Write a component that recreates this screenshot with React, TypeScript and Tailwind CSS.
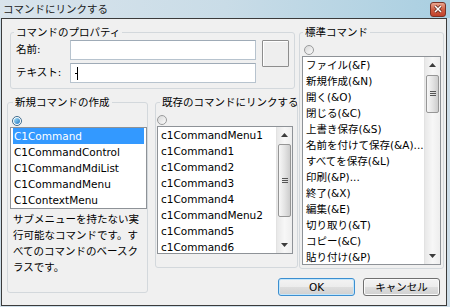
import React from "react";

const standardItems = [
  "ファイル(&F)",
  "新規作成(&N)",
  "開く(&O)",
  "閉じる(&C)",
  "上書き保存(&S)",
  "名前を付けて保存(&A)...",
  "すべてを保存(&L)",
  "印刷(&P)...",
  "終了(&X)",
  "編集(&E)",
  "切り取り(&T)",
  "コピー(&C)",
  "貼り付け(&P)",
];

const linkItems = [
  "c1CommandMenu1",
  "c1Command1",
  "c1Command2",
  "c1Command3",
  "c1Command4",
  "c1CommandMenu2",
  "c1Command5",
  "c1Command6",
];

const newItems = ["C1Command", "C1CommandControl", "C1CommandMdiList", "C1CommandMenu", "C1ContextMenu"];

function Radio({ checked = false }: { checked?: boolean }) {
  return (
    <div
      className={`flex h-[10px] w-[10px] items-center justify-center rounded-full border ${
        checked ? "border-[#3d6a8c] bg-white" : "border-[#9a9b9c] bg-gradient-to-br from-[#d8d8d8] to-[#fbfbfb]"
      }`}
    >
      {checked && <div className="h-[6px] w-[6px] rounded-full bg-gradient-to-br from-[#a5e2fb] to-[#1c78c0]" />}
    </div>
  );
}

function ScrollBar({ thumb }: { thumb: string }) {
  return (
    <div className="flex w-[16px] shrink-0 flex-col border-l border-[#e2e2e2] bg-gradient-to-r from-[#e8e8e8] via-[#f7f7f7] to-[#eeeeee]">
      <div className="flex h-[16px] items-center justify-center">
        <svg width="7" height="4" viewBox="0 0 7 4">
          <path d="M0 4L3.5 0L7 4Z" fill="#3c3c3c" />
        </svg>
      </div>
      <div
        className={`mx-[1px] flex items-center justify-center rounded-[2px] border border-[#969696] bg-gradient-to-r from-[#f7f7f7] via-[#e4e4e4] to-[#cdcdcd] ${thumb}`}
      >
        <svg width="6" height="6" viewBox="0 0 6 6">
          <path d="M0 0.5H6M0 2.5H6M0 4.5H6" stroke="#555" strokeWidth="1" />
        </svg>
      </div>
      <div className="flex-1" />
      <div className="flex h-[16px] items-center justify-center">
        <svg width="7" height="4" viewBox="0 0 7 4">
          <path d="M0 0L3.5 4L7 0Z" fill="#3c3c3c" />
        </svg>
      </div>
    </div>
  );
}

function ListBox({
  items,
  selected,
  box,
  thumb,
}: {
  items: string[];
  selected?: number;
  box: string;
  thumb?: string;
}) {
  return (
    <div className={`flex overflow-hidden border border-[#8e9297] bg-white ${box}`}>
      <div className="min-w-0 flex-1 overflow-hidden px-[2px]">
        {items.map((item, i) => (
          <div
            key={item}
            className={`h-[16px] whitespace-nowrap px-[1px] leading-[16px] ${
              i === selected ? "bg-[#3399ff] text-white" : ""
            }`}
          >
            {item}
          </div>
        ))}
      </div>
      {thumb && <ScrollBar thumb={thumb} />}
    </div>
  );
}

function TextBox({ children }: { children?: React.ReactNode }) {
  return (
    <div className="flex h-[20px] items-center border border-[#b7c3ce] border-t-[#9fabb7] bg-white">{children}</div>
  );
}

export default function App() {
  return (
    <div className="h-[307px] w-[450px] overflow-hidden bg-[#cddde8] font-['DejaVu_Sans','Noto_Sans_CJK_JP',sans-serif] text-[10.5px] text-black">
      {/* Title bar */}
      <div className="flex h-[18px] items-center justify-between bg-gradient-to-r from-[#d9e4ec] via-[#c9dce7] to-[#a9cfe1] pl-[3px] pr-[4px]">
        <span className="leading-[12px] text-[#1a1a1a]">コマンドにリンクする</span>
        <div className="flex h-[15px] w-[16px] items-center justify-center rounded-[3px] border border-[#7a3326] bg-gradient-to-b from-[#e9a690] via-[#cf5f45] to-[#c0412b]">
          <svg width="8" height="8" viewBox="0 0 8 8">
            <path d="M1 1L7 7M7 1L1 7" stroke="#5a2418" strokeWidth="3" />
            <path d="M1 1L7 7M7 1L1 7" stroke="#fff" strokeWidth="1.5" />
          </svg>
        </div>
      </div>

      {/* Client area */}
      <div className="ml-[1px] h-[288px] w-[446px] border border-[#3b3b3b] bg-[#f0f0f0]">
        <div className="grid grid-cols-[148px_144px_145px] grid-rows-[70px_182px_18px] pl-[5px] pt-[7px]">
          {/* コマンドのプロパティ */}
          <fieldset className="col-span-2 col-start-1 row-start-1 ml-[3px] h-[63px] w-[285px] self-start rounded-[3px] border border-[#d3d8dc]">
            <legend className="ml-[3px] px-[2px] leading-[12px]">コマンドのプロパティ</legend>
            <div className="flex pl-[5px] pt-[2px]">
              <div className="grid grid-cols-[54px_186px] items-center gap-y-[3px]">
                <span>名前:</span>
                <TextBox />
                <span>テキスト:</span>
                <TextBox>
                  <div className="ml-[4px] flex items-center">
                    <div className="h-px w-[2px] bg-black" />
                    <div className="h-[13px] w-px bg-black" />
                  </div>
                </TextBox>
              </div>
              <div className="ml-[6px] h-[27px] w-[27px] rounded-[1px] border border-[#8d8d8d] bg-[#eeeeee] shadow-[inset_1px_1px_0_#ffffff]" />
            </div>
          </fieldset>

          {/* 標準コマンド */}
          <fieldset className="col-start-3 row-span-2 row-start-1 h-[243px] w-[145px] self-start rounded-[3px] border border-[#d3d8dc]">
            <legend className="ml-[3px] px-[2px] leading-[12px]">標準コマンド</legend>
            <div className="ml-[4px] mt-[7px]">
              <Radio />
            </div>
            <ListBox items={standardItems} box="ml-[2px] mt-[1px] h-[209px] w-[139px]" thumb="mt-[2px] h-[38px]" />
          </fieldset>

          {/* 新規コマンドの作成 */}
          <fieldset className="col-start-1 row-span-2 row-start-2 h-[197px] w-[141px] self-start rounded-[3px] border border-[#d3d8dc]">
            <legend className="ml-[5px] px-[2px] leading-[12px]">新規コマンドの作成</legend>
            <div className="ml-[4px] mt-[8px]">
              <Radio checked />
            </div>
            <ListBox items={newItems} selected={0} box="ml-[2px] mt-[1px] h-[82px] w-[137px]" />
            <p className="ml-[5px] mt-[2px] whitespace-nowrap leading-[16px]">
              サブメニューを持たない実
              <br />
              行可能なコマンドです。す
              <br />
              べてのコマンドのベースク
              <br />
              ラスです。
            </p>
          </fieldset>

          {/* 既存のコマンドにリンクする */}
          <fieldset className="col-start-2 row-start-2 h-[172px] w-[139px] self-start rounded-[3px] border border-[#d3d8dc]">
            <legend className="ml-[4px] max-w-[137px] overflow-hidden whitespace-nowrap px-[2px] leading-[12px]">
              既存のコマンドにリンクする
            </legend>
            <div className="ml-[1px] mt-[7px]">
              <Radio />
            </div>
            <ListBox items={linkItems} box="ml-[1px] mt-[1px] h-[128px] w-[136px]" thumb="mt-[1px] h-[73px]" />
          </fieldset>

          {/* Buttons */}
          <div className="col-span-2 col-start-2 row-start-3 flex justify-end gap-[8px] pr-[4px]">
            <button className="h-[18px] w-[77px] rounded-[3px] border border-[#3c8fd0] bg-[linear-gradient(to_bottom,#f3f3f3_0%,#ececec_50%,#dedede_50%,#d0d0d0_100%)] leading-[16px] shadow-[inset_0_0_0_1px_#c4e6fb]">
              OK
            </button>
            <button className="h-[18px] w-[77px] rounded-[3px] border border-[#707070] bg-[linear-gradient(to_bottom,#f3f3f3_0%,#ececec_50%,#dedede_50%,#d0d0d0_100%)] leading-[16px] shadow-[inset_0_0_0_1px_#fbfbfb]">
              キャンセル
            </button>
          </div>
        </div>
      </div>
    </div>
  );
}
